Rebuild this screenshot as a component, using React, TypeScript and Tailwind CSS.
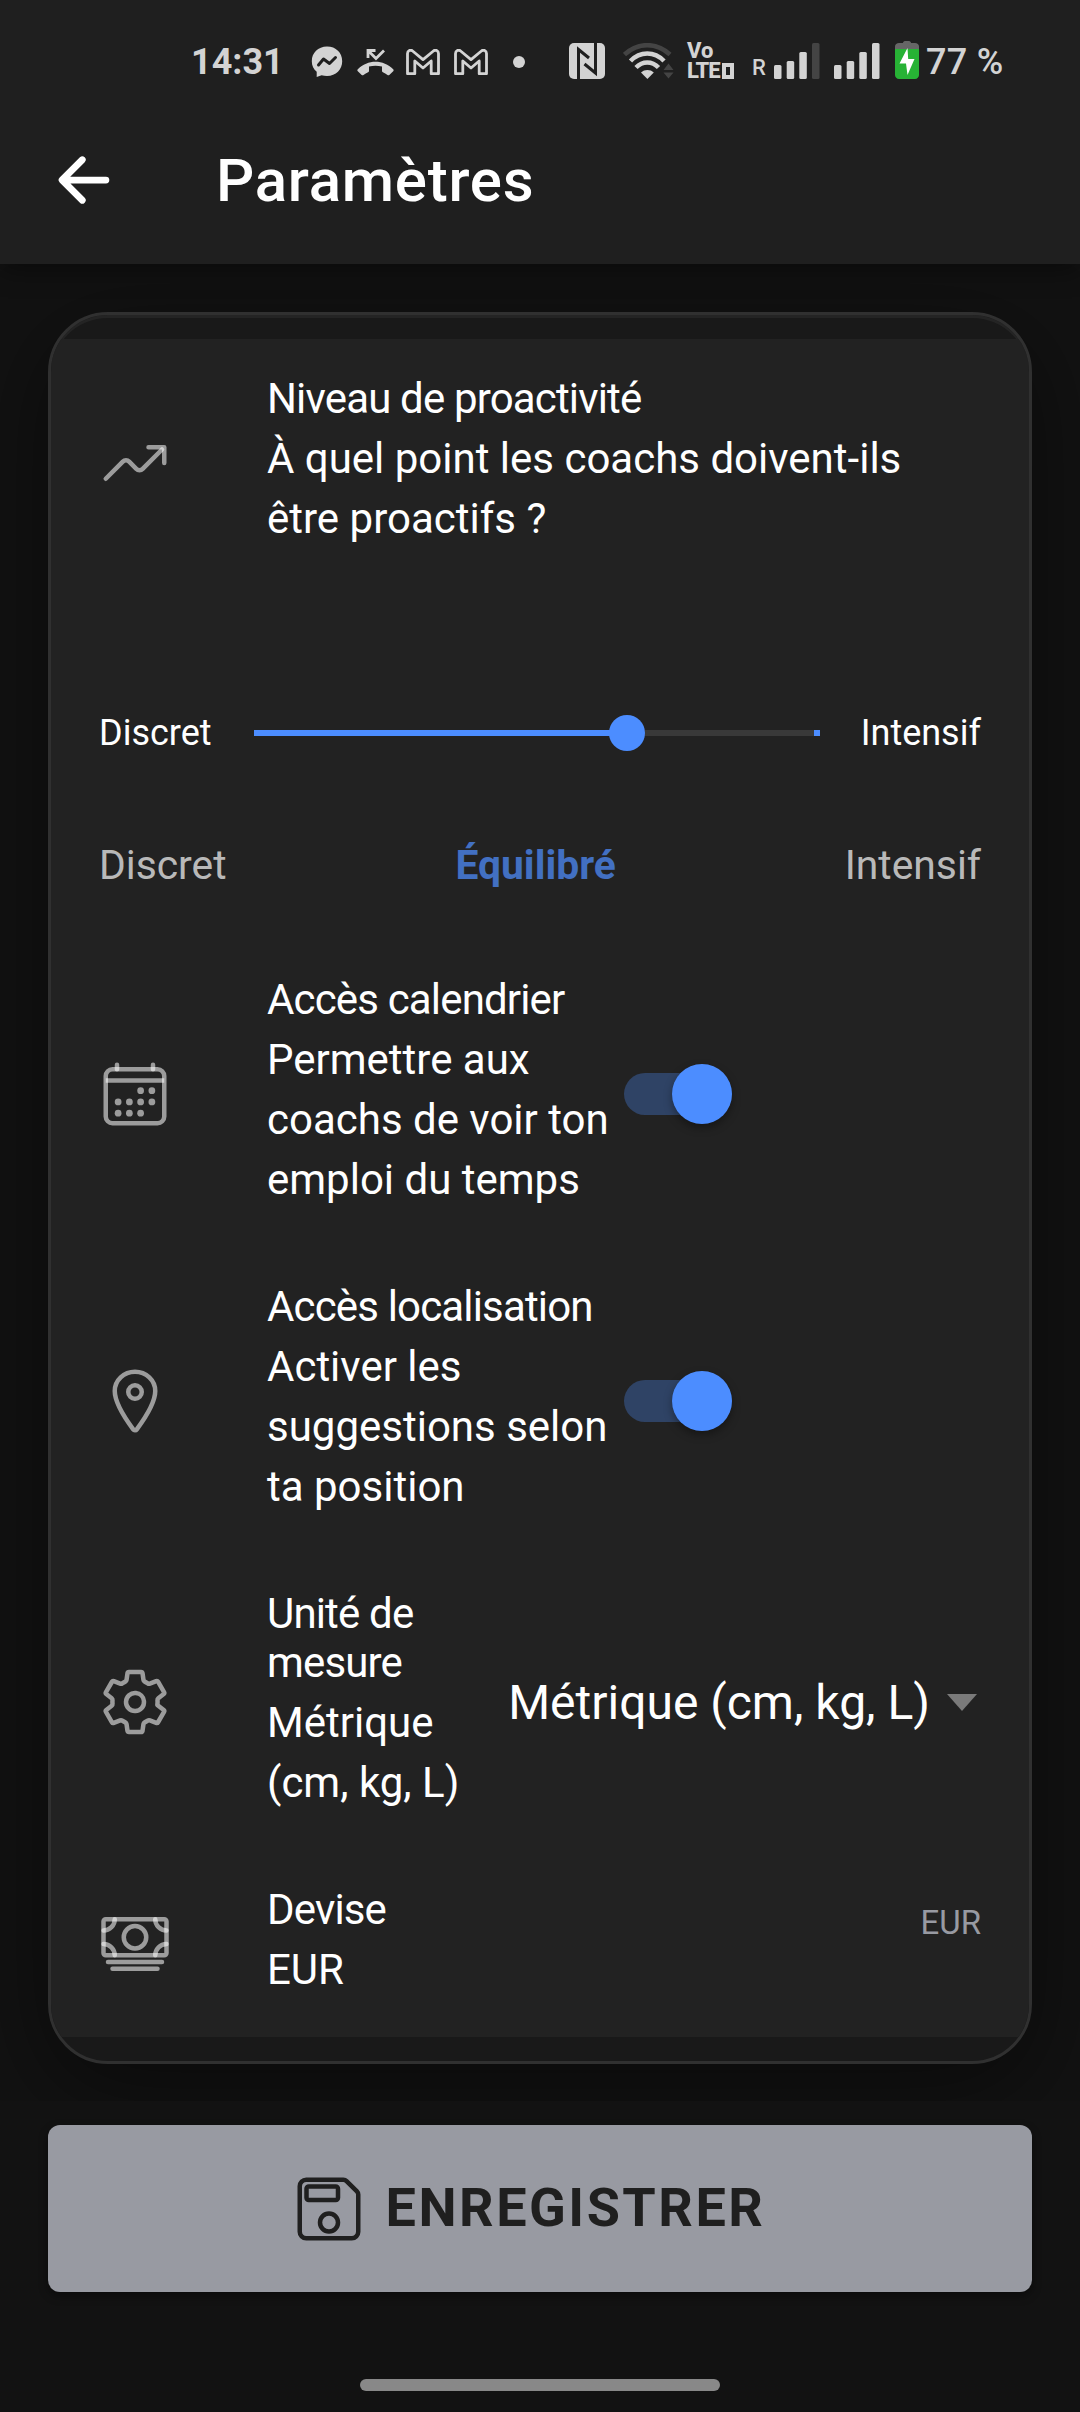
import React from 'react';
import {
  IoArrowBackOutline,
  IoCalendarOutline,
  IoCashOutline,
  IoLocationOutline,
  IoSaveOutline,
  IoSettingsOutline,
  IoTrendingUpOutline,
} from 'react-icons/io5';

const GmailIcon = () => (
  <svg width="34" height="26" viewBox="0 0 34 26" fill="none" stroke="#d3d3d3" strokeWidth="2.8" strokeLinejoin="round">
    <path d="M1.5 4.5C1.5 1.5 4.6.4 6.6 2L17 10.6 27.4 2c2-1.6 5.1-.5 5.1 2.5v20.2h-7.3V12L17 19l-8.200-7v12.700H1.500z" />
  </svg>
);

const SignalIcon = ({ dimLast = false }: { dimLast?: boolean }) => (
  <svg width="46" height="36" viewBox="0 0 46 36" fill="#d3d3d3">
    <rect x="0" y="22" width="7.5" height="14" rx="1.5" />
    <rect x="12.7" y="18" width="7.5" height="18" rx="1.5" />
    <rect x="25.3" y="9" width="7.5" height="27" rx="1.5" />
    <rect x="38" y="0" width="7.5" height="36" rx="1.5" fill={dimLast ? '#444444' : '#d3d3d3'} />
  </svg>
);

const StatusBar = () => (
  <div className="flex h-[124px] items-start pt-10 text-[#d3d3d3]">
    <div className="ml-[191px] flex h-11 w-[120px] items-center text-[36px] leading-none font-bold">14:31</div>
    <div className="flex h-11 items-center">
      <svg width="32" height="32" viewBox="0 0 32 32">
        <path fill="#d3d3d3" d="M16 .6C7 .6.8 7 .8 15.200c0 4.400 1.800 8 4.900 10.600V31l4.900-1.800c1.700.5 3.500.7 5.400.7 9 0 15.200-6.300 15.200-14.700S25 .6 16 .6z" />
        <path fill="none" stroke="#1f1f1f" strokeWidth="3" strokeLinejoin="round" strokeLinecap="round" d="M7.500 19l5-6 6 4.500 6-6" />
      </svg>
      <svg className="ml-[14px]" width="37" height="28" viewBox="0 0 37 28">
        <path fill="#d3d3d3" d="M.8 21.300C10.500 11.300 26.500 11.300 36.200 21.300c.6.6.6 1.300 0 1.900l-3.900 3.700c-.5.5-1.200.5-1.800.1-1.500-1.100-3-2-4.600-2.700-.6-.3-.9-.8-.9-1.400v-4.300c-4.300-1.300-8.700-1.300-13 0v4.300c0 .6-.3 1.200-.9 1.400-1.600.7-3.200 1.600-4.600 2.700-.6.4-1.300.4-1.800-.1L.8 23.200c-.6-.6-.6-1.300 0-1.900z" />
        <path fill="none" stroke="#d3d3d3" strokeWidth="2.8" d="M11 10V2.500h7.500M11.500 3l7.500 7.500L27 2.500" />
      </svg>
      <div className="ml-3 flex gap-[14px]">
        <GmailIcon />
        <GmailIcon />
      </div>
      <span className="ml-[25px] size-3 rounded-full bg-[#d3d3d3]" />
    </div>
    <div className="ml-11 flex h-[42px] items-center">
      <svg width="36" height="36" viewBox="0 0 36 36">
        <rect width="36" height="36" rx="5" fill="#d3d3d3" />
        <path fill="none" stroke="#1f1f1f" strokeWidth="3" d="M9.500 36V6.500L20 15M26.500 0v30L15.500 21" />
      </svg>
      <svg className="ml-[18px]" width="52" height="36" viewBox="0 0 52 36" fill="none" strokeWidth="4.5">
        <path stroke="#444444" d="M1.500 11.500C15-1 33.500-1 47 11.500" />
        <path stroke="#d3d3d3" d="M7.500 18C17 8 31.500 8 41 18M13 24.500c6.500-6.700 16-6.700 22.500 0" />
        <path fill="#d3d3d3" d="M18 29.500c3.500-3.300 9.300-3.300 12.800 0L24.400 36z" />
        <path fill="#444444" d="M45.500 20.500l5 6.500h-10zM40.500 29.500h10l-5 6z" />
      </svg>
      <div className="ml-3 flex w-[47px] flex-col text-[22px] leading-5 font-extrabold">
        <span>Vo</span>
        <span className="flex items-center tracking-[-1px]">
          LTE
          <span className="ml-0.5 h-4 w-3 shrink-0 border-[4px] border-[#d3d3d3]" />
        </span>
      </div>
      <span className="mt-[14px] ml-[18px] w-[14px] text-[22px] leading-none font-medium">R</span>
      <div className="ml-2 flex gap-[14px]">
        <SignalIcon dimLast />
        <SignalIcon />
      </div>
      <svg className="-mt-0.5 ml-[15px]" width="24" height="38" viewBox="0 0 24 38">
        <path fill="#666666" d="M8 2c0-1 .8-2 2-2h4c1.200 0 2 1 2 2h4c2.200 0 4 1.500 4 3.500V10H0V5.500C0 3.500 1.800 2 4 2z" />
        <path fill="#27b235" d="M0 8h24v26c0 2.200-1.800 4-4 4H4c-2.200 0-4-1.800-4-4z" />
        <path fill="#ffffff" d="M12.500 7L4.500 22.500h6.500L12.500 34l7-16h-6.300z" />
      </svg>
      <span className="ml-[7px] pt-px text-[36px] leading-none font-medium tracking-[0.3px]">77 %</span>
    </div>
  </div>
);

const Toggle = () => (
  <div className="relative h-[60px] w-[108px] shrink-0 py-[9px]">
    <div className="h-[42px] rounded-full bg-[#2f4365]" />
    <div className="absolute top-0 right-0 size-[60px] rounded-full bg-[#4c8dff] shadow-[0_4px_8px_rgba(0,0,0,0.35)]" />
  </div>
);

type RowProps = {
  icon: React.ReactNode;
  title: string;
  description: string;
  textClass: string;
  children?: React.ReactNode;
};

const SettingRow = ({ icon, title, description, textClass, children }: RowProps) => (
  <div className="flex items-center px-12 py-[35px]">
    <div className="mr-24 size-[72px] shrink-0 text-[72px] text-white/55">{icon}</div>
    <div className={`pb-0.5 ${textClass}`}>
      <h3 className="mb-1.5 text-[42px] leading-[49px] tracking-[-0.84px]">{title}</h3>
      <p className="text-[42px] leading-[60px]">{description}</p>
    </div>
    {children}
  </div>
);

const App = () => {
  return (
    <div className="flex h-[2412px] w-[1080px] flex-col overflow-hidden bg-[#121212] font-[Roboto,sans-serif] text-white">
      <header className="relative z-10 h-[264px] shrink-0 bg-[#1f1f1f] shadow-[0_6px_24px_rgba(0,0,0,0.4)]">
        <StatusBar />
        <div className="flex h-28 items-center pl-12">
          <IoArrowBackOutline className="size-[72px]" />
          <h1 className="ml-24 pt-0.5 text-[60px] leading-none font-medium tracking-[0.75px]">Paramètres</h1>
        </div>
      </header>

      <main className="h-[1837px] shrink-0 overflow-hidden px-12 pt-12">
        <section className="h-[1752px] overflow-hidden rounded-[60px] border-[3px] border-[#303030] bg-[#191919] py-6 shadow-[inset_0_3px_0_#242424,0_24px_96px_rgba(0,0,0,0.45)]">
          <div className="bg-[#222222]">
            <SettingRow
              icon={<IoTrendingUpOutline />}
              title="Niveau de proactivité"
              description="À quel point les coachs doivent-ils être proactifs ?"
              textClass="flex-1"
            />

            <div className="h-[354px] px-12 pt-[117px]">
              <div className="flex h-[60px] items-center justify-between text-[36px]">
                <span>Discret</span>
                <div className="relative ml-px flex h-9 w-[566px] items-center">
                  <div className="flex h-1.5 w-full justify-end bg-[#393939]">
                    <div className="w-1.5 bg-[#4c8dff]" />
                  </div>
                  <div className="absolute left-0 h-1.5 w-[373px] bg-[#4c8dff]" />
                  <div className="absolute left-[355px] size-9 rounded-full bg-[#4c8dff]" />
                </div>
                <span>Intensif</span>
              </div>
              <div className="mt-[78px] flex h-12 items-center justify-between text-[40.8px] leading-[48px] text-white/70">
                <span>Discret</span>
                <span className="font-bold text-[#4270c2]">Équilibré</span>
                <span>Intensif</span>
              </div>
            </div>

            <SettingRow
              icon={<IoCalendarOutline />}
              title="Accès calendrier"
              description="Permettre aux coachs de voir ton emploi du temps"
              textClass="w-[357px]"
            >
              <Toggle />
            </SettingRow>
            <SettingRow
              icon={<IoLocationOutline />}
              title="Accès localisation"
              description="Activer les suggestions selon ta position"
              textClass="w-[357px]"
            >
              <Toggle />
            </SettingRow>
            <SettingRow
              icon={<IoSettingsOutline />}
              title="Unité de mesure"
              description="Métrique (cm, kg, L)"
              textClass="w-[202px]"
            >
              <div className="ml-auto flex items-center gap-[17px] pr-1">
                <span className="pt-0.5 text-[48px] leading-none">Métrique (cm, kg, L)</span>
                <svg width="30" height="17" viewBox="0 0 30 17" fill="#7a7a7a">
                  <path d="M0 0h30L15 17z" />
                </svg>
              </div>
            </SettingRow>
            <SettingRow icon={<IoCashOutline />} title="Devise" description="EUR" textClass="flex-1">
              <span className="mb-[43px] text-[33px] leading-none text-[#989aa2]">EUR</span>
            </SettingRow>
          </div>
        </section>
      </main>

      <footer className="flex flex-1 flex-col items-center bg-[#121212] px-12 pt-6">
        <button className="flex h-[167px] w-full items-center justify-center rounded-xl bg-[#989aa2] text-[#1f1f1f] shadow-[0_4px_10px_rgba(0,0,0,0.4)]">
          <IoSaveOutline className="mr-[21px] size-[72px]" />
          <span className="mr-[22px] pb-0.5 text-[54px] leading-none font-bold tracking-[2.5px]">ENREGISTRER</span>
        </button>
        <div className="mt-[87px] h-3 w-[360px] rounded-full bg-[#888888]" />
      </footer>
    </div>
  );
};

export default App;
